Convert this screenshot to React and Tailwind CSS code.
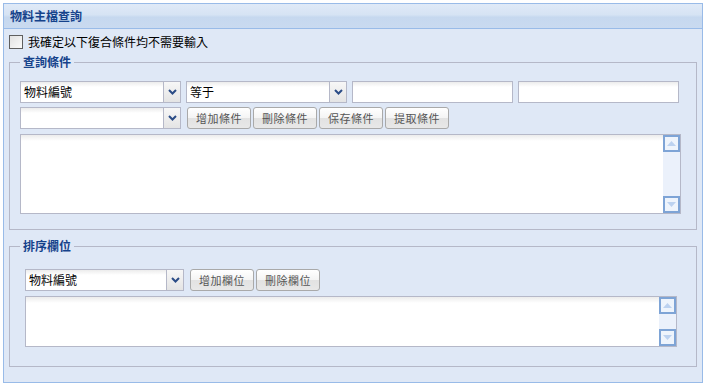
import React from 'react';

const font = { fontFamily: '"Noto Sans CJK TC", "Noto Sans CJK SC", sans-serif' };

function Chevron() {
  return (
    <svg width="9" height="6" viewBox="0 0 9 6">
      <polyline points="1,1 4.5,4.5 8,1" fill="none" stroke="#2b4c86" strokeWidth="2" />
    </svg>
  );
}

function Combo({ value, width }) {
  return (
    <div className={`flex h-[22px] border border-[#b5b8c8] bg-[linear-gradient(#ececec,#fff_5px)] ${width}`}>
      <div className="flex-1 pl-[3px] text-[12px] leading-[20px] text-black">{value}</div>
      <div className="flex w-[17px] items-center justify-center border-l border-[#b5b8c8] bg-[linear-gradient(#f7f7f7,#e4e4e4)]">
        <Chevron />
      </div>
    </div>
  );
}

function TextBox() {
  return <div className="h-[22px] w-[161px] border border-[#b5b8c8] bg-[linear-gradient(#ececec,#fff_5px)]" />;
}

function Btn({ children }) {
  return (
    <button className="h-[22px] w-[64px] rounded-[3px] border border-[#a9a9a9] bg-[linear-gradient(#ffffff_0%,#f4f4f4_50%,#e2e2e2_51%,#e8e8e8_100%)] text-[11px] tracking-[0.5px] text-[#555]">
      {children}
    </button>
  );
}

function ScrollBtn({ up }) {
  return (
    <div className="flex h-[17px] w-[17px] items-center justify-center border-2 border-[#7ea4d6] bg-[#eef4fc]">
      <svg width="9" height="5" viewBox="0 0 9 5">
        {up ? <polygon points="0,5 4.5,0 9,5" fill="#bcd2f0" /> : <polygon points="0,0 4.5,5 9,0" fill="#bcd2f0" />}
      </svg>
    </div>
  );
}

function Area({ width, height }) {
  return (
    <div className={`flex border border-[#b5b8c8] bg-[linear-gradient(#ececec,#fff_6px)] ${width} ${height}`}>
      <div className="flex-1" />
      <div className="flex w-[17px] flex-col bg-[#ebf1fb]">
        <ScrollBtn up />
        <div className="flex-1" />
        <ScrollBtn />
      </div>
    </div>
  );
}

export default function App() {
  return (
    <div className="pl-[3px] pt-[3px]" style={font}>
      <div className="flex h-[380px] w-[700px] flex-col border border-[#99bbe8] bg-[#dfe8f6]">
        <div className="flex h-[25px] items-center border-b border-[#99bbe8] bg-[linear-gradient(#e0eaf7,#d6e3f4_45%,#c6d8ef_55%,#c9daf0)] pl-[6px] text-[12px] font-bold text-[#15428b]">
          物料主檔查詢
        </div>

        <div className="flex flex-col px-[5px]">
          <div className="mt-[6px] flex h-[14px] items-center gap-[5px]">
            <div className="h-[14px] w-[14px] border border-[#5f5f5f] bg-[linear-gradient(135deg,#e2e2e2,#fafafa)]" />
            <span className="text-[12px] text-black">我確定以下復合條件均不需要輸入</span>
          </div>

          <fieldset className="mt-[6px] border border-[#b5b8c8] pb-[15px] pl-[10px]">
            <legend className="px-[3px] text-[12px] font-bold leading-[14px] text-[#15428b]">查詢條件</legend>
            <div className="mt-[12px] flex flex-col gap-[4px]">
              <div className="flex gap-[5px]">
                <Combo value="物料編號" width="w-[161px]" />
                <Combo value="等于" width="w-[161px]" />
                <TextBox />
                <TextBox />
              </div>
              <div className="flex items-center">
                <Combo value="" width="w-[161px]" />
                <div className="ml-[6px] flex gap-[2px]">
                  <Btn>增加條件</Btn>
                  <Btn>刪除條件</Btn>
                  <Btn>保存條件</Btn>
                  <Btn>提取條件</Btn>
                </div>
              </div>
              <div className="mt-[1px]">
                <Area width="w-[661px]" height="h-[80px]" />
              </div>
            </div>
          </fieldset>

          <fieldset className="mt-[9px] border border-[#b5b8c8] pb-[19px] pl-[10px]">
            <legend className="px-[3px] text-[12px] font-bold leading-[14px] text-[#15428b]">排序欄位</legend>
            <div className="mt-[16px] flex flex-col gap-[5px] pl-[5px]">
              <div className="flex items-center">
                <Combo value="物料編號" width="w-[159px]" />
                <div className="ml-[6px] flex gap-[2px]">
                  <Btn>增加欄位</Btn>
                  <Btn>刪除欄位</Btn>
                </div>
              </div>
              <Area width="w-[652px]" height="h-[51px]" />
            </div>
          </fieldset>
        </div>
      </div>
    </div>
  );
}
